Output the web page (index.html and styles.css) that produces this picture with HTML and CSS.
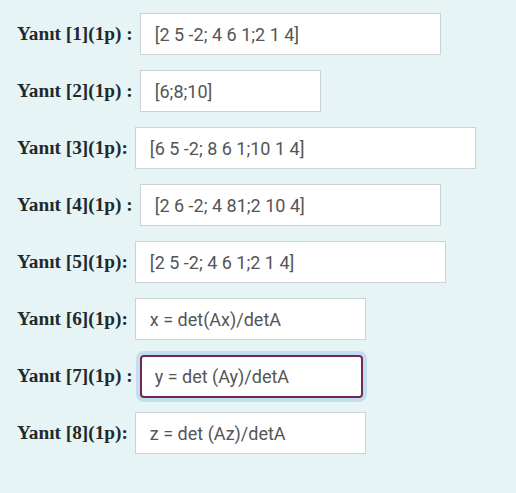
FILE: index.html
```html
<!DOCTYPE html>
<html lang="tr">
<head>
    <meta charset="UTF-8">
    <title>Yanıtlar</title>
    <link rel="stylesheet" href="styles.css">
</head>
<body>
    <div class="answers">
        <div class="answer-row">
            <label class="answer-label">Yanıt [1](1p) :</label>
            <input class="answer-input w-301" type="text" value="[2 5 -2; 4 6 1;2 1 4]">
        </div>
        <div class="answer-row">
            <label class="answer-label">Yanıt [2](1p) :</label>
            <input class="answer-input w-181" type="text" value="[6;8;10]">
        </div>
        <div class="answer-row">
            <label class="answer-label">Yanıt [3](1p):</label>
            <input class="answer-input w-341" type="text" value="[6 5 -2; 8 6 1;10 1 4]">
        </div>
        <div class="answer-row">
            <label class="answer-label">Yanıt [4](1p) :</label>
            <input class="answer-input w-301" type="text" value="[2 6 -2; 4 81;2 10 4]">
        </div>
        <div class="answer-row">
            <label class="answer-label">Yanıt [5](1p):</label>
            <input class="answer-input w-311" type="text" value="[2 5 -2; 4 6 1;2 1 4]">
        </div>
        <div class="answer-row">
            <label class="answer-label">Yanıt [6](1p):</label>
            <input class="answer-input w-231" type="text" value="x = det(Ax)/detA">
        </div>
        <div class="answer-row">
            <label class="answer-label">Yanıt [7](1p) :</label>
            <input class="answer-input w-223 focused" type="text" value="y = det (Ay)/detA">
        </div>
        <div class="answer-row">
            <label class="answer-label">Yanıt [8](1p):</label>
            <input class="answer-input w-231" type="text" value="z = det (Az)/detA">
        </div>
    </div>
</body>
</html>
```

FILE: styles.css
```css
body, html {
    margin: 0;
    padding: 0;
    background-color: #e7f4f6;
}
.answers {
    padding: 13px 0 0 17px;
    display: flex;
    flex-direction: column;
    gap: 15px;
}
.answer-row {
    display: flex;
    align-items: center;
    height: 42px;
}
.answer-label {
    font-family: "Liberation Serif", serif;
    font-weight: bold;
    font-size: 19.3px;
    color: #1f2a2c;
    margin-right: 7px;
    white-space: pre;
}
.answer-input {
    box-sizing: border-box;
    height: 42px;
    margin: 0;
    padding: 0 14px;
    border: 1px solid #cdd3d5;
    border-radius: 0;
    background-color: #ffffff;
    font-family: Roboto, sans-serif;
    font-size: 18px;
    color: #555555;
    outline: none;
}
.w-181 { width: 181px; }
.w-223 { width: 223px; }
.w-231 { width: 231px; }
.w-301 { width: 301px; }
.w-311 { width: 311px; }
.w-341 { width: 341px; }
.answer-input.focused {
    height: 43px;
    border: 2px solid #73294f;
    border-radius: 4px;
    box-shadow: 0 0 0 4px #c2def0;
    padding-left: 13px;
}
```
